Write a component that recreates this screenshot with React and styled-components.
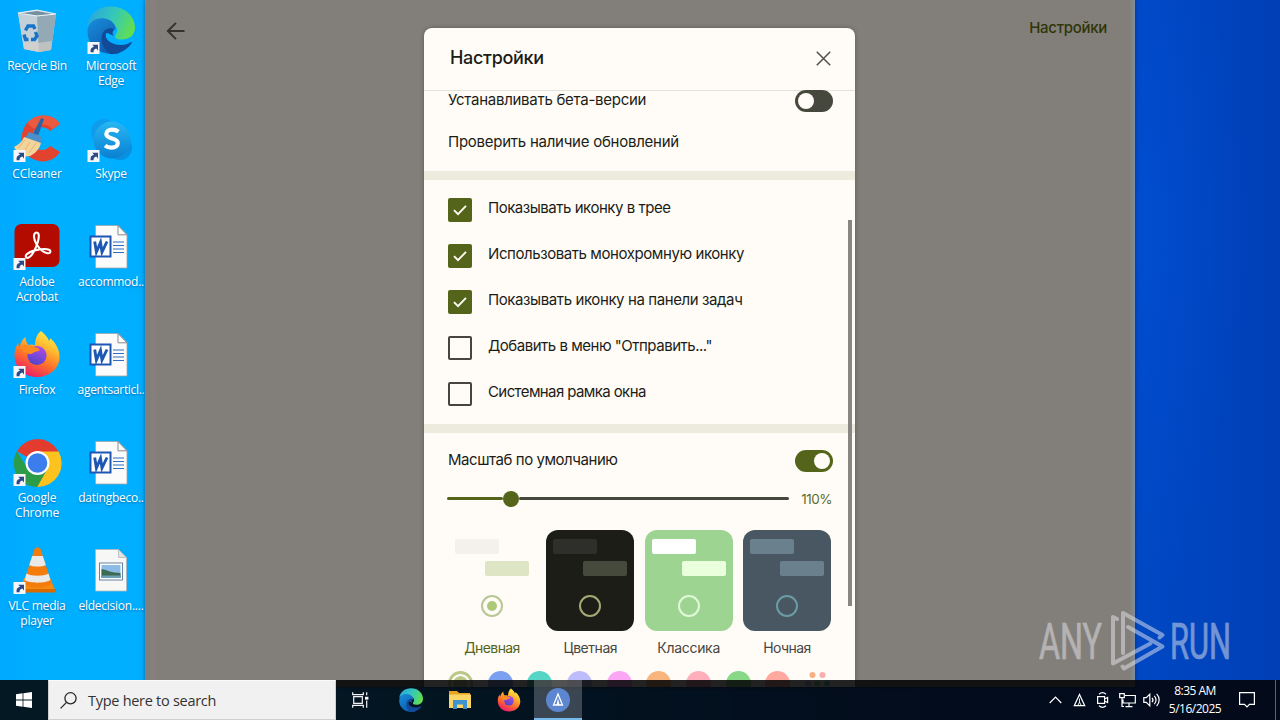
import React from 'react';
import styled, { createGlobalStyle } from 'styled-components';

const GlobalStyle = createGlobalStyle`
  *, *::before, *::after { box-sizing: border-box; }
  html, body { margin: 0; padding: 0; overflow: hidden; }
  svg { display: block; flex: none; overflow: visible; }
`;

const Screen = styled.div`
  width: 1280px;
  height: 720px;
  display: grid;
  grid-template-rows: 680px 40px;
  overflow: hidden;
  background:
    radial-gradient(ellipse 110px 380px at 1135px 230px, rgba(0, 84, 225, 0.45), transparent),
    linear-gradient(90deg, #00aaff 0, #00b0ff 60px, #00aeff 145px, #0088e8 500px, #0050c8 900px, #0048c4 1135px, #003fb6 1280px);
  font-family: 'Open Sans', 'Noto Sans', sans-serif;
`;

const Desktop = styled.div`
  display: grid;
  grid-template-columns: 145px 990px 1fr;
  height: 687px;
`;

/* ---------- Desktop shortcuts ---------- */

const Shortcuts = styled.div`
  display: grid;
  grid-template-columns: 74px 71px;
  grid-auto-rows: 108px;
  align-content: start;
  padding-top: 6px;
`;

const Shortcut = styled.div`
  display: flex;
  flex-direction: column;
  align-items: center;
  gap: 2px;
  width: 74px;
`;

const ShortcutLabel = styled.span`
  color: #fff;
  font-size: 12px;
  line-height: 15px;
  letter-spacing: ${(p) => p.$spacing || '-0.2px'};
  text-align: center;
  white-space: pre;
  text-shadow: 0 1px 2px rgba(0, 40, 90, 0.5);
`;

const Arrow = () => (
  <g>
    <rect x="0.5" y="36" width="12" height="12" fill="#f4f6fa" />
    <path d="M3.6 46.2c-.4-3 .6-5 3.4-5.5l-1.700-2h5.700v5.800l-1.700-1.900c-1.900.4-2.900 1.500-2.700 3.600z" fill="#2b4a86" />
  </g>
);

const Glyph = ({ arrow, children }) => (
  <svg width="48" height="50" viewBox="0 0 48 50">
    {children}
    {arrow && <Arrow />}
  </svg>
);

const RecycleBin = () => (
  <Glyph>
    <path d="M5 7 L24 4 L43 8 L38 44 L26 46 L11 43z" fill="#b9cdd8" />
    <path d="M5 7 L24 10 L26 46 L11 43z" fill="#c3d0d8" />
    <path d="M24 10 L43 8 L38 44 L26 46z" fill="#93a9b6" />
    <path d="M7.500 7.400 L24 5 L40 8 L24 9.600z" fill="#77909f" />
    <path d="M5 7 L24 10 L43 8 L24 4z" fill="none" stroke="#e8f1f5" strokeWidth="1.200" />
    <path d="M10 36 L25 37 L39 35 L38 44 L26 46 L11 43z" fill="#d9cfc9" opacity=".65" />
    <g fill="none" stroke="#1673c9" strokeWidth="3.400">
      <path d="M12.500 24.500l2.500-4.500h5.500l1.500 3" />
      <path d="M22.500 26l1.500 4-2.500 3.500h-3.500" />
      <path d="M15.500 33.500h-3l-1.500-5" />
    </g>
  </Glyph>
);

const EdgeArt = ({ id }) => (
  <g>
    <defs>
      <linearGradient id={`${id}a`} x1="0" y1="0.300" x2="1" y2="0.600">
        <stop offset="0" stopColor="#2aa6e0" />
        <stop offset=".5" stopColor="#35c8b8" />
        <stop offset="1" stopColor="#63e04b" />
      </linearGradient>
      <linearGradient id={`${id}b`} x1="0" y1="0" x2="0.700" y2="1">
        <stop offset="0" stopColor="#1b8edb" />
        <stop offset="1" stopColor="#0a58ae" />
      </linearGradient>
    </defs>
    <path d="M0.500 20C2 8 11 0.500 24 0.500c14 0 24 10 24 21 0 7-5 12-13 12-6 0-8-2-7-4 3-3 3-8-1-11C20 12.500 5 12 0.500 20z" fill={`url(#${id}a)`} />
    <path d="M0.500 24C2 14 11 11 18 12.500c6 1 11 6 10.500 11-5-3-11 1-10 9 1 8 9 14 15 14-4 2-9 2-13 1C8 46 0 36 0.500 24z" fill={`url(#${id}b)`} />
    <path d="M19 27c-2 6 5 12 15 12 5 0 8-2 10-3 1 0 1 1 0 2-5 7-13 10-20 10C17 45 13 36 15 29c1-5 7-8 13-6-3 2-3 5-1 7-3-1-5-3-8-3z" fill="#124a98" />
  </g>
);

const Edge = () => <Glyph arrow><EdgeArt id="edgeDesk" /></Glyph>;

const CCleaner = () => (
  <Glyph arrow>
    <path d="M47 10 37 17C33 12 25 12 21 17c-4 6-3 12 1 16 4 4 11 4 15-1l10 6C41 47 30 50 20 45 7 39 5 21 14 9 23-1 40-1 47 10z" fill="#e2432f" />
    <path d="M47 10C40-1 23-1 14 9l7 6c6-7 14-5 18 0z" fill="#f06445" opacity=".7" />
    <path d="M28 4l3 1-6 17-5-2z" fill="#2767a8" />
    <path d="M16 18l12 4 0 8-16-6z" fill="#4a91cc" />
    <path d="M11 23l17 6c-1 5-5 10-11 13C10 44 4 39 1 33c4-2 8-5 10-10z" fill="#f3d49a" />
    <path d="M12 26 5 34m12-6-7 11m13-10-7 10" stroke="#e2b872" fill="none" />
  </Glyph>
);

const Skype = () => (
  <Glyph arrow>
    <defs>
      <linearGradient id="skypeFill" x1="0" y1="0" x2="0" y2="1">
        <stop offset="0" stopColor="#27b7f3" />
        <stop offset="1" stopColor="#0a7fd2" />
      </linearGradient>
    </defs>
    <circle cx="17" cy="18" r="13" fill="#109cec" />
    <circle cx="33" cy="34" r="12" fill="#0a90e0" />
    <circle cx="25" cy="26" r="18.500" fill="url(#skypeFill)" />
    <path d="M31.500 17.600c-1.800-1.300-4-1.900-6.500-1.900-3.500 0-5.700 1.700-5.700 4.300 0 5.700 11.500 3.200 11.500 9 0 2.800-2.400 4.600-6.200 4.600-2.600 0-4.900-.7-6.600-2" fill="none" stroke="#fff" strokeWidth="4.200" />
  </Glyph>
);

const Acrobat = () => (
  <Glyph arrow>
    <rect x="1.500" y="2" width="45" height="43" rx="7" fill="#b30b00" />
    <path d="M23.500 10.500c3.500 0 2.200 6.500 1.200 10-1.900 6.300-6.200 14.500-9.700 15.300-2 .4-3.200-1.600-1.300-3.500 3.200-3.200 11.800-5.200 17.300-5.300 4.500 0 6.800 1 6.300 2.900-.6 2.300-4.500 1.400-7.600-.8-4.700-3.300-8.500-9.700-8.700-14.300-.1-2.500.8-4.300 2.500-4.300z" fill="none" stroke="#fff" strokeWidth="2.100" />
  </Glyph>
);

const FirefoxArt = ({ id }) => (
  <g>
    <defs>
      <linearGradient id={`${id}a`} x1="0.800" y1="0" x2="0.300" y2="1">
        <stop offset="0" stopColor="#fff44f" />
        <stop offset=".35" stopColor="#ffb52c" />
        <stop offset=".65" stopColor="#ff6b2c" />
        <stop offset="1" stopColor="#e8196f" />
      </linearGradient>
      <linearGradient id={`${id}b`} x1="0.700" y1="0" x2="0.300" y2="1">
        <stop offset="0" stopColor="#b24be8" />
        <stop offset="1" stopColor="#4b45c8" />
      </linearGradient>
    </defs>
    <path d="M28 1c4 3 7 7 8 10 1-1 1-2 1-3 6 5 10 12 9.500 20C46 39 36 47 24 47 11 47 1.500 38 1.500 25c0-5 1.500-9 4-12 0 2 0 3 1 4 1-4 3-8 6-10 0 3 1 6 3 8 3-1 5-.5 6.500.5C22 9 24 4 28 1z" fill={`url(#${id}a)`} />
    <circle cx="24" cy="25.500" r="9.600" fill={`url(#${id}b)`} />
    <path d="M7 18c5-4 10-3 13-1 3 0 6 1 7 3-2 2-5 1-7 3-1 1-3 1-4 1-4-1-7-3-9-6z" fill="#ff8a1f" />
  </g>
);

const Firefox = () => <Glyph arrow><FirefoxArt id="foxDesk" /></Glyph>;

const Chrome = () => (
  <Glyph arrow>
    <path d="M24.500 25 4 13.200A23.800 23.800 0 0 1 45.600 13.500z" fill="#e33b2e" />
    <path d="M24.500 25V13.500H45.600A23.800 23.800 0 0 1 24.200 49z" fill="#fcc31e" />
    <path d="M24.500 25 34.500 31 24.200 49A23.800 23.800 0 0 1 4 13.200l10.500 17z" fill="#2c9c48" />
    <circle cx="24.500" cy="25" r="12" fill="#fff" />
    <circle cx="24.500" cy="25" r="9.800" fill="#3b7ded" />
  </Glyph>
);

const Vlc = () => (
  <Glyph arrow>
    <path d="M11 32h26l6 14H6z" fill="#f58a0e" />
    <path d="M6 43h37v3.500H6z" fill="#d96a00" />
    <path d="M21.500 3c1-2 5-2 6 0l11 34c-3 6-25 6-28 0z" fill="#f47c0c" />
    <path d="M19.200 10h10.600l3 9c-4 2-12.500 2-16.600 0z" fill="#e9e9e9" />
    <path d="M13.500 27.500c5 3 17 3 22 0l2 6.500c-5 3.500-21 3.500-26 0z" fill="#e9e9e9" />
  </Glyph>
);

const WordDoc = () => (
  <Glyph>
    <path d="M8.500 3.500H31l9 9V46H8.500z" fill="#fbfbfc" stroke="#a0a4a8" strokeWidth=".8" />
    <path d="M31 3.500v9.300h9z" fill="#fff" stroke="#85898d" strokeWidth="1" />
    <g stroke="#2f6fbf" strokeWidth="1.200">
      <path d="M26 20h11M26 23.500h11M26 27h11M26 30.500h11" />
    </g>
    <rect x="3.500" y="14.500" width="20" height="20" fill="#fff" stroke="#1d57b4" strokeWidth="2" />
    <path d="M7.700 19.500l1.700 10.500L13.500 20.500l1.500 9.500 5-10.500" fill="none" stroke="#1d57b4" strokeWidth="2.900" />
  </Glyph>
);

const ImageDoc = () => (
  <Glyph>
    <path d="M8.500 3.500H31.500l8 8V45H8.500z" fill="#f7f7f5" stroke="#b4b6b8" strokeWidth=".8" />
    <path d="M31.500 3.500v8h8z" fill="#dfe3e5" stroke="#b4b6b8" strokeWidth=".8" />
    <rect x="12.500" y="17" width="23" height="17" fill="#fff" stroke="#6883a8" strokeWidth="1" />
    <rect x="14.500" y="19" width="19" height="13" fill="#8bbbe6" />
    <path d="M14.500 23c6 1 10 4 19 4v5h-19z" fill="#3d6b52" />
    <path d="M14.500 29.500h19V32h-19z" fill="#6aa0b8" />
  </Glyph>
);

const SHORTCUTS = [
  [RecycleBin, 'Recycle Bin', '-0.28px'],
  [Edge, 'Microsoft\nEdge', '-0.28px'],
  [CCleaner, 'CCleaner', '-0.15px'],
  [Skype, 'Skype', '-0.3px'],
  [Acrobat, 'Adobe\nAcrobat', '-0.25px'],
  [WordDoc, 'accommod..', '-0.25px'],
  [Firefox, 'Firefox', '-0.25px'],
  [WordDoc, 'agentsarticl..', '-0.32px'],
  [Chrome, 'Google\nChrome', '-0.15px'],
  [WordDoc, 'datingbeco..', '-0.25px'],
  [Vlc, 'VLC media\nplayer', '-0.2px'],
  [ImageDoc, 'eldecision....', '-0.25px'],
];

/* ---------- Application window ---------- */

const AppWindow = styled.div`
  display: grid;
  grid-template-columns: 279px 431px 280px;
  background: linear-gradient(90deg, #87817f 0, #7f7f7b 4px, #88807f 8px, #827e79 14px, #827e79 984px, #84888a 988px, #7d8fa4 990px);
  box-shadow: 0 0 4px rgba(0, 40, 80, 0.6);
`;

const BackArea = styled.div`
  padding: 21px 0 0 21px;
`;

const WindowTitle = styled.div`
  padding: 18px 28px 0 0;
  text-align: right;
  color: #303508;
  font: 500 15px/20px Inter, sans-serif;
  letter-spacing: -0.3px;
`;

const Dialog = styled.div`
  margin-top: 28px;
  height: 659px;
  display: grid;
  grid-template-rows: 62px 1fr;
  grid-template-columns: minmax(0, 1fr);
  overflow: hidden;
  border-radius: 8px 8px 0 0;
  background: #fffcf7;
  box-shadow: 0 0 4px rgba(0, 0, 0, 0.3);
  font-family: Inter, sans-serif;
  color: #1c1c17;
`;

const DialogHeader = styled.div`
  display: flex;
  align-items: center;
  justify-content: space-between;
  padding: 0 24px 2px 26px;
`;

const DialogTitle = styled.h1`
  margin: 0;
  font-size: 18px;
  font-weight: 500;
  line-height: 24px;
  letter-spacing: -0.3px;
`;

const ScrollArea = styled.div`
  position: relative;
  display: flex;
  flex-direction: column;
  overflow: hidden;
  background: linear-gradient(#e1e4dc 1px, transparent 1px);
`;

const ScrollThumb = styled.div`
  position: absolute;
  top: 130px;
  right: 3px;
  width: 4px;
  height: 386px;
  background: #888583;
`;

const Divider = styled.div`
  height: 9px;
  flex: none;
  background: #edebde;
`;

const Group = styled.div`
  display: flex;
  flex-direction: column;
  flex: none;
  height: ${(p) => p.$height};
  padding: ${(p) => p.$padding};
`;

const Row = styled.div`
  display: flex;
  flex: none;
  align-items: center;
  justify-content: ${(p) => (p.$spread ? 'space-between' : 'flex-start')};
  gap: 16px;
  height: ${(p) => p.$height};
`;

const Label = styled.span`
  font-size: 15px;
  line-height: 20px;
  white-space: nowrap;
  letter-spacing: ${(p) => p.$spacing || '-0.35px'};
  padding-bottom: ${(p) => p.$lift || '2px'};
`;

const Toggle = styled.div`
  display: flex;
  justify-content: ${(p) => (p.$on ? 'flex-end' : 'flex-start')};
  width: 38px;
  height: 22px;
  padding: 3px;
  border-radius: 11px;
  background: ${(p) => (p.$on ? '#55641b' : '#46483e')};
  &::after {
    content: '';
    width: 16px;
    height: 16px;
    border-radius: 50%;
    background: #fffcf7;
  }
`;

const CheckBox = styled.div`
  display: grid;
  place-items: center;
  width: 24px;
  height: 24px;
  border-radius: 2px;
  border: 2px solid ${(p) => (p.$checked ? '#55641b' : '#46453f')};
  background: ${(p) => (p.$checked ? '#55641b' : 'transparent')};
`;

const SliderRow = styled.div`
  display: flex;
  align-items: center;
  justify-content: space-between;
  height: 20px;
  margin: 17px 0 0 -1px;
`;

const SliderTrack = styled.div`
  display: flex;
  align-items: center;
  width: 342px;
`;

const TrackPart = styled.div`
  height: 3px;
  width: ${(p) => p.$width};
  flex: ${(p) => (p.$width ? 'none' : '1')};
  margin-bottom: 1px;
  border-radius: 2px;
  background: ${(p) => p.$color};
`;

const SliderThumb = styled.div`
  width: 16px;
  height: 16px;
  border-radius: 50%;
  background: #55641b;
`;

const SliderValue = styled.span`
  font-size: 13.5px;
  color: #5e6c28;
  letter-spacing: -0.5px;
  margin-right: 1px;
`;

const Themes = styled.div`
  display: flex;
  justify-content: space-between;
  width: 383px;
  margin-top: 21px;
`;

const Theme = styled.div`
  display: flex;
  flex-direction: column;
  align-items: center;
  gap: 7px;
  width: 88px;
`;

const ThemeCard = styled.div`
  display: grid;
  grid-template-rows: 15px 15px 22px;
  grid-template-columns: 100%;
  align-content: start;
  row-gap: 7px;
  width: 88px;
  height: 101px;
  padding: 9px 7px 0 7px;
  border-radius: 12px;
  background: ${(p) => p.$bg};
`;

const Bubble = styled.div`
  width: 44px;
  height: 15px;
  border-radius: 2px;
  justify-self: ${(p) => (p.$sent ? 'end' : 'start')};
  background: ${(p) => p.$color};
`;

const Radio = styled.div`
  display: grid;
  place-items: center;
  justify-self: center;
  width: 22px;
  height: 22px;
  margin-top: 12px;
  border-radius: 50%;
  border: 2px solid ${(p) => p.$color};
  &::after {
    content: '';
    width: 10px;
    height: 10px;
    border-radius: 50%;
    background: ${(p) => (p.$selected ? '#adc878' : 'transparent')};
  }
`;

const ThemeName = styled.span`
  font-size: 14px;
  line-height: 20px;
  letter-spacing: ${(p) => p.$spacing};
  color: ${(p) => (p.$selected ? '#55641b' : '#46453f')};
`;

const Swatches = styled.div`
  display: flex;
  justify-content: space-between;
  width: 382px;
  margin-top: 13px;
`;

const Swatch = styled.div`
  width: 25px;
  height: 25px;
  border-radius: 50%;
  background: ${(p) => p.$color};
  ${(p) => p.$ring && `
    border: 3px solid ${p.$color};
    background: radial-gradient(circle, ${p.$color} 7px, #fffcf7 7.500px);
  `}
`;

const CHECKS = [
  ['Показывать иконку в трее', true, '-0.47px'],
  ['Использовать монохромную иконку', true, '-0.42px'],
  ['Показывать иконку на панели задач', true, '-0.4px'],
  ['Добавить в меню "Отправить..."', false, '-0.48px'],
  ['Системная рамка окна', false, '-0.6px'],
];

const THEMES = [
  { name: 'Дневная', spacing: '-0.6px', bg: 'transparent', got: '#f4f1ec', sent: '#dee5c4', ring: '#b9c794', selected: true },
  { name: 'Цветная', spacing: '-0.45px', bg: '#1c1d17', got: '#2e2e2a', sent: '#454a3c', ring: '#a6a875' },
  { name: 'Классика', spacing: '-0.3px', bg: '#9dd492', got: '#ffffff', sent: '#eaffdc', ring: '#e0f8d8' },
  { name: 'Ночная', spacing: '-0.6px', bg: '#485761', got: '#6b808d', sent: '#6b808d', ring: '#6b9ca5' },
];

const SWATCHES = ['#7ba0ef', '#56d4c6', '#bdbdfb', '#fba5f5', '#f8b47d', '#ffaebb', '#88d888', '#ffa89f'];

/* ---------- Watermark ---------- */

const Watermark = styled.div`
  position: absolute;
  left: 1036px;
  top: 606px;
  opacity: 0.5;
`;

/* ---------- Taskbar ---------- */

const Taskbar = styled.div`
  position: relative;
  display: flex;
  align-items: stretch;
  background: rgba(3, 3, 4, 0.88);
`;

const StartButton = styled.div`
  display: grid;
  place-items: center;
  width: 48px;
`;

const SearchBox = styled.div`
  display: flex;
  align-items: center;
  gap: 11px;
  width: 288px;
  padding-left: 11px;
  background: #f1f1f1;
  border: 1px solid #cfcfcf;
  border-top-color: #fafafa;
  color: #333;
  font-size: 14.5px;
  letter-spacing: -0.28px;
`;

const TaskButton = styled.div`
  display: grid;
  place-items: center;
  width: ${(p) => p.$width || '49px'};
  padding-top: 2px;
  background: ${(p) => (p.$active ? 'rgba(255,255,255,0.22)' : 'none')};
  border-bottom: 2px solid ${(p) => (p.$active ? '#76b9ed' : 'transparent')};
`;

const Tray = styled.div`
  display: flex;
  align-items: center;
  margin-left: auto;
  height: 40px;
`;

const TrayItem = styled.div`
  display: grid;
  place-items: center;
  width: 24px;
`;

const Clock = styled.div`
  display: flex;
  flex-direction: column;
  align-items: center;
  width: 62px;
  margin: 0 13px 0 1px;
  color: #fff;
  font-size: 12px;
  line-height: 18px;
  letter-spacing: ${(p) => p.$spacing || '-0.5px'};
  white-space: nowrap;
`;

const ShowDesktop = styled.div`
  align-self: stretch;
  width: 5px;
  margin-left: 20px;
  border-left: 1px solid #5c6372;
`;

export default function App() {
  return (
    <Screen>
      <GlobalStyle />
      <Desktop>
        <Shortcuts>
          {SHORTCUTS.map(([Icon, text, spacing], i) => (
            <Shortcut key={i}>
              <Icon />
              <ShortcutLabel $spacing={spacing}>{text}</ShortcutLabel>
            </Shortcut>
          ))}
        </Shortcuts>

        <AppWindow>
          <BackArea>
            <svg width="20" height="20" viewBox="0 0 20 20" fill="none" stroke="#33322c" strokeWidth="1.900">
              <path d="M18.500 10H2.200M10 1.800 1.800 10l8.200 8.200" />
            </svg>
          </BackArea>

          <Dialog>
            <DialogHeader>
              <DialogTitle>Настройки</DialogTitle>
              <svg width="15" height="15" viewBox="0 0 15 15" stroke="#55554f" strokeWidth="1.600">
                <path d="M.8.800l13.400 13.400M14.200.800.8 14.200" />
              </svg>
            </DialogHeader>
            <ScrollArea>
              <Group $height="81px" $padding="0 22px 0 24px">
                <Row $spread $height="22px">
                  <Label $spacing="-0.27px">Устанавливать бета-версии</Label>
                  <Toggle />
                </Row>
                <Row $height="62px">
                  <Label $spacing="-0.25px">Проверить наличие обновлений</Label>
                </Row>
              </Group>
              <Divider />
              <Group $height="244px" $padding="7px 24px">
                {CHECKS.map(([text, checked, spacing]) => (
                  <Row key={text} $height="46px">
                    <CheckBox $checked={checked}>
                      {checked && (
                        <svg width="14" height="12" viewBox="0 0 14 12" fill="none" stroke="#fffcf7" strokeWidth="1.900">
                          <path d="M1 6.200l4 4L13 1.800" />
                        </svg>
                      )}
                    </CheckBox>
                    <Label $lift="4px" $spacing={spacing}>{text}</Label>
                  </Row>
                ))}
              </Group>
              <Divider />
              <Group $height="auto" $padding="17px 22px 0 24px">
                <Row $spread $height="22px">
                  <Label $spacing="-0.45px">Масштаб по умолчанию</Label>
                  <Toggle $on />
                </Row>
                <SliderRow>
                  <SliderTrack>
                    <TrackPart $width="56px" $color="#55641b" />
                    <SliderThumb />
                    <TrackPart $color="#46483e" />
                  </SliderTrack>
                  <SliderValue>110%</SliderValue>
                </SliderRow>
                <Themes>
                  {THEMES.map((t) => (
                    <Theme key={t.name}>
                      <ThemeCard $bg={t.bg}>
                        <Bubble $color={t.got} />
                        <Bubble $sent $color={t.sent} />
                        <Radio $color={t.ring} $selected={t.selected} />
                      </ThemeCard>
                      <ThemeName $selected={t.selected} $spacing={t.spacing}>{t.name}</ThemeName>
                    </Theme>
                  ))}
                </Themes>
                <Swatches>
                  <Swatch $ring $color="#bac888" />
                  {SWATCHES.map((c) => (
                    <Swatch key={c} $color={c} />
                  ))}
                  <svg width="25" height="25" viewBox="0 0 25 25">
                    <circle cx="7.500" cy="4" r="3" fill="#f5b183" />
                    <circle cx="17.500" cy="4" r="3" fill="#f8adb0" />
                    <circle cx="3" cy="12.500" r="3" fill="#bdbdfb" />
                    <circle cx="12.500" cy="12.500" r="3" fill="#88d888" />
                    <circle cx="22" cy="12.500" r="3" fill="#56d4c6" />
                  </svg>
                </Swatches>
              </Group>
              <ScrollThumb />
            </ScrollArea>
          </Dialog>

          <WindowTitle>Настройки</WindowTitle>
        </AppWindow>
      </Desktop>

      <Taskbar>
        <StartButton>
          <svg width="16" height="16" viewBox="0 0 16 16" fill="#fff">
            <path d="M0 2.200 6.600 1.300V7.600H0zM7.400 1.200 16 0V7.600H7.400zM0 8.400H6.600V14.700L0 13.800zM7.400 8.400H16V16L7.400 14.800z" />
          </svg>
        </StartButton>
        <SearchBox>
          <svg width="17" height="17" viewBox="0 0 17 17" fill="none" stroke="#262626" strokeWidth="1.300">
            <circle cx="10.500" cy="6.300" r="5.600" />
            <path d="M6.500 10.400.6 16.400" />
          </svg>
          Type here to search
        </SearchBox>
        <TaskButton $width="49px">
          <svg width="17" height="16" viewBox="0 0 17 16" fill="none" stroke="#f4f4f4" strokeWidth="1.200">
            <path d="M.7.300v2.400h10.600V.3M.7 15.700v-2.400h10.600v2.400M1.700 4.700h8.600v6.600H1.700zM14.700.3v3M14.700 8.500v7.200" />
            <path d="M13 4.800h3.400v2.800H13z" fill="#fff" stroke="none" />
          </svg>
        </TaskButton>
        <TaskButton $width="51px">
          <svg width="24" height="24" viewBox="0 0 48 48"><EdgeArt id="edgeBar" /></svg>
        </TaskButton>
        <TaskButton $width="48px">
          <svg width="22" height="20" viewBox="0 0 22 20">
            <path d="M0 1h8l2 2h11v3H0z" fill="#e9a321" />
            <path d="M0 4.500h22V18H0z" fill="#fbd667" />
            <path d="M4 10h14v9h-4v-4.500H8V19H4z" fill="#3e93d0" />
          </svg>
        </TaskButton>
        <TaskButton $width="50px">
          <svg width="24" height="24" viewBox="0 0 48 48"><FirefoxArt id="foxBar" /></svg>
        </TaskButton>
        <TaskButton $active $width="48px">
          <svg width="24" height="24" viewBox="0 0 24 24">
            <circle cx="12" cy="12" r="12" fill="#5c86cf" />
            <path d="M12 6 7.500 17h9z" fill="none" stroke="#fff" strokeWidth="1.300" />
            <path d="M12 10l1.500 7h-3z" fill="#fff" />
          </svg>
        </TaskButton>
        <Tray>
          <TrayItem>
            <svg width="13" height="8" viewBox="0 0 13 8" fill="none" stroke="#fff" strokeWidth="1.200">
              <path d="M.7 7 6.500 1.200 12.300 7" />
            </svg>
          </TrayItem>
          <TrayItem>
            <svg width="13" height="14" viewBox="0 0 13 14" fill="none" stroke="#fff" strokeWidth="1.200">
              <path d="M6.500 1.500 1.300 12.700h10.400z" />
              <path d="M6.500 5.500v4M6.500 9l-1.600 3.500M6.500 9l1.600 3.500" strokeWidth=".9" />
            </svg>
          </TrayItem>
          <TrayItem>
            <svg width="14" height="16" viewBox="0 0 14 16" fill="none" stroke="#fff" strokeWidth="1.200">
              <path d="M1.600 4.700h7v6.600h-7zM8.600 7l3-1.600v5.200l-3-1.600M3 2.200C5 .5 8 .5 10 2.200M3 13.800c2 1.700 5 1.700 7 0" />
            </svg>
          </TrayItem>
          <TrayItem>
            <svg width="17" height="15" viewBox="0 0 17 15" fill="none" stroke="#fff" strokeWidth="1.200">
              <path d="M6 2.500h10.300v7.500H4V6.500M10 10v3.500M6.500 13.600h7M.7.700h4.600v4H.7zM3 4.700v8.800h2" />
            </svg>
          </TrayItem>
          <TrayItem>
            <svg width="17" height="14" viewBox="0 0 17 14" fill="none" stroke="#fff" strokeWidth="1.200">
              <path d="M.8 4.700h2.500l3.500-3.500v11.600L3.300 9.300H.8zM9 4.800c1.200 1.300 1.200 3.100 0 4.400M11.300 2.800c2.300 2.400 2.300 6 0 8.400M13.600.9c3.400 3.500 3.400 8.700 0 12.200" />
            </svg>
          </TrayItem>
          <Clock>
            <span>8:35 AM</span>
            <span>5/16/2025</span>
          </Clock>
          <svg width="16" height="16" viewBox="0 0 16 16" fill="none" stroke="#fff" strokeWidth="1.200">
            <path d="M.6.700h14.800v11.600H10.500L8 14.900 5.500 12.300H.6z" />
          </svg>
          <ShowDesktop />
        </Tray>
      </Taskbar>

      <Watermark>
        <svg width="200" height="70" viewBox="0 0 200 70">
          <g fill="#e6e6ee" stroke="#e6e6ee" strokeWidth=".7" fontFamily="Roboto, sans-serif" fontSize="50">
            <text x="3" y="53" textLength="63" lengthAdjust="spacingAndGlyphs">ANY</text>
            <text x="134" y="53" textLength="61" lengthAdjust="spacingAndGlyphs">RUN</text>
          </g>
          <g fill="none" stroke="#e6e6ee" strokeWidth="4" strokeLinejoin="round" strokeLinecap="round">
            <path d="M81 13l-4-2v46.500l37.500-20M87 47V7l39.500 22-3 2.500M92 21l34.500 19.500L88 62.500l-1.500-2" />
          </g>
        </svg>
      </Watermark>
    </Screen>
  );
}
